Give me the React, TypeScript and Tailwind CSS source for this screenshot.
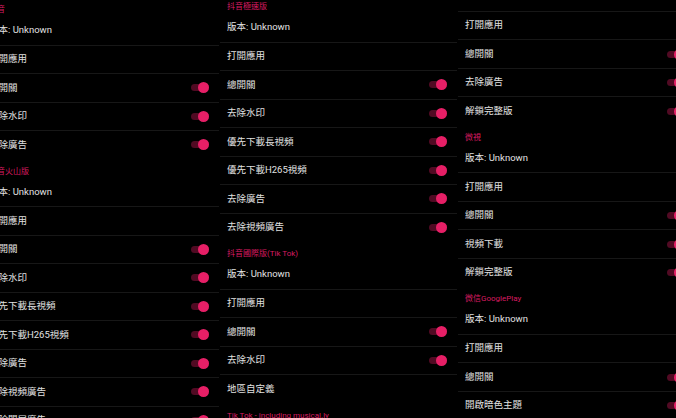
type Row = { label: string; toggle?: boolean }
type Section = { title?: string; rows: Row[] }

const version: Row = { label: "版本: Unknown" }
const open: Row = { label: "打開應用" }
const on = (label: string): Row => ({ label, toggle: true })

const columns: { offset: string; sections: Section[] }[] = [
  {
    offset: "mt-[-3px]",
    sections: [
      { title: "抖音", rows: [version, open, on("總開關"), on("去除水印"), on("去除廣告")] },
      {
        title: "抖音火山版",
        rows: [
          version,
          open,
          on("總開關"),
          on("去除水印"),
          on("優先下載長視頻"),
          on("優先下載H265視頻"),
          on("去除廣告"),
          on("去除視頻廣告"),
          on("去除開屏廣告"),
        ],
      },
    ],
  },
  {
    offset: "mt-[-6px]",
    sections: [
      {
        title: "抖音極速版",
        rows: [
          version,
          open,
          on("總開關"),
          on("去除水印"),
          on("優先下載長視頻"),
          on("優先下載H265視頻"),
          on("去除廣告"),
          on("去除視頻廣告"),
        ],
      },
      {
        title: "抖音國際版(Tik Tok)",
        rows: [version, open, on("總開關"), on("去除水印"), { label: "地區自定義" }],
      },
      { title: "Tik Tok - including musical.ly", rows: [version, open] },
    ],
  },
  {
    offset: "mt-[-17.75px]",
    sections: [
      { rows: [version, open, on("總開關"), on("去除廣告"), on("解鎖完整版")] },
      { title: "微視", rows: [version, open, on("總開關"), on("視頻下載"), on("解鎖完整版")] },
      { title: "微信GooglePlay", rows: [version, open, on("總開關"), on("開啟暗色主題")] },
    ],
  },
]

function Toggle() {
  return (
    <div className="relative flex h-[11px] w-[18px] items-center">
      <div className="h-[7px] w-full rounded-full bg-[#e91e63]/35" />
      <div className="absolute right-0 h-[11px] w-[11px] rounded-full bg-[#e61f66]" />
    </div>
  )
}

function Column({ offset, sections }: { offset: string; sections: Section[] }) {
  return (
    <div className={`flex w-[237px] shrink-0 flex-col ${offset}`}>
      {sections.map((s, si) => (
        <div key={si} className="flex flex-col">
          {s.title && (
            <div className="flex h-[19px] items-end pb-[1px] pl-[7px] text-[8px] leading-[10px] text-[#d81b60]">
              {s.title}
            </div>
          )}
          {s.rows.map((r, ri) => (
            <div
              key={ri}
              className={`flex h-[28.5px] items-center justify-between pl-[7px] pr-[10px] text-[9.5px] text-[#e2e2e2] ${
                ri > 0 ? "border-t border-[#171717]" : ""
              }`}
            >
              <span>{r.label}</span>
              {r.toggle && <Toggle />}
            </div>
          ))}
        </div>
      ))}
    </div>
  )
}

export default function App() {
  return (
    <div
      className="h-[418px] w-[676px] overflow-hidden bg-black"
      style={{ fontFamily: 'Roboto, "Noto Sans CJK TC", sans-serif' }}
    >
      <div className="ml-[-18px] flex items-start gap-[1px]">
        {columns.map((c, i) => (
          <Column key={i} offset={c.offset} sections={c.sections} />
        ))}
      </div>
    </div>
  )
}
